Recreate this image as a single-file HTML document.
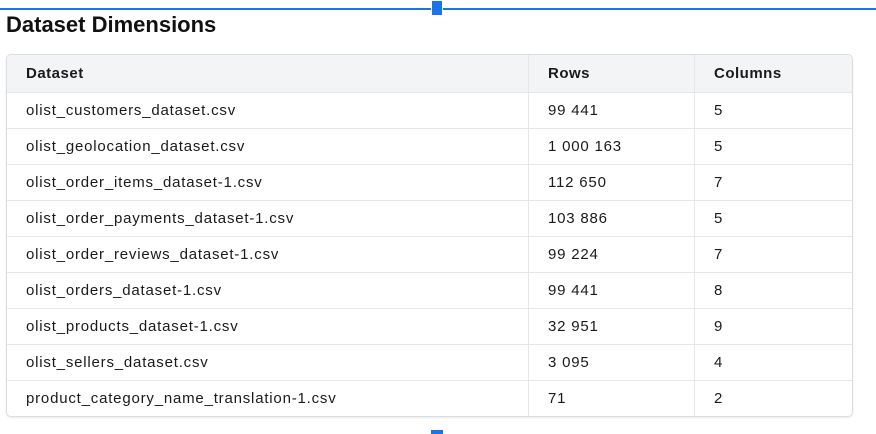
<!DOCTYPE html>
<html><head><style>
body{margin:0;width:876px;height:434px;background:#fff;position:relative;overflow:hidden;font-family:"Liberation Sans",sans-serif;color:#1a1a1a}
.line{position:absolute;left:0;top:8px;width:876px;height:2px;background:#1a73e8}
.h{position:absolute;left:431px;top:1px;width:12px;height:14px;background:#1a73e8;border-left:1px solid #fff;border-right:1px solid #fff;box-sizing:border-box}
.hb{position:absolute;left:431px;top:430px;width:12px;height:4px;background:#1a73e8}
h1{position:absolute;left:6px;top:12px;margin:0;font-size:22px;font-weight:bold;letter-spacing:0px;color:#111}
.t{position:absolute;left:6px;top:54px;width:845px;border:1px solid #dcdde1;border-radius:5px;overflow:hidden;box-shadow:0 1px 2px rgba(0,0,0,.08)}
table{border-collapse:collapse;width:100%;font-size:15px;letter-spacing:0.8px}
td,th{height:35px;padding:0 0 0 19px;text-align:left;border-top:1px solid #e6e7ea;border-left:1px solid #e6e7ea}
th{height:37px;background:#f3f4f6;font-weight:bold;border-top:none;font-size:15px;letter-spacing:0.5px}
td:first-child,th:first-child{border-left:none}
</style></head><body>
<div class="line"></div><div class="h"></div>
<h1>Dataset Dimensions</h1>
<div class="t"><table>
<tr><th style="width:502px">Dataset</th><th style="width:146px">Rows</th><th>Columns</th></tr>
<tr><td>olist_customers_dataset.csv</td><td>99 441</td><td>5</td></tr>
<tr><td>olist_geolocation_dataset.csv</td><td>1 000 163</td><td>5</td></tr>
<tr><td>olist_order_items_dataset-1.csv</td><td>112 650</td><td>7</td></tr>
<tr><td>olist_order_payments_dataset-1.csv</td><td>103 886</td><td>5</td></tr>
<tr><td>olist_order_reviews_dataset-1.csv</td><td>99 224</td><td>7</td></tr>
<tr><td>olist_orders_dataset-1.csv</td><td>99 441</td><td>8</td></tr>
<tr><td>olist_products_dataset-1.csv</td><td>32 951</td><td>9</td></tr>
<tr><td>olist_sellers_dataset.csv</td><td>3 095</td><td>4</td></tr>
<tr><td>product_category_name_translation-1.csv</td><td>71</td><td>2</td></tr>
</table></div>
<div class="hb"></div>
</body></html>
